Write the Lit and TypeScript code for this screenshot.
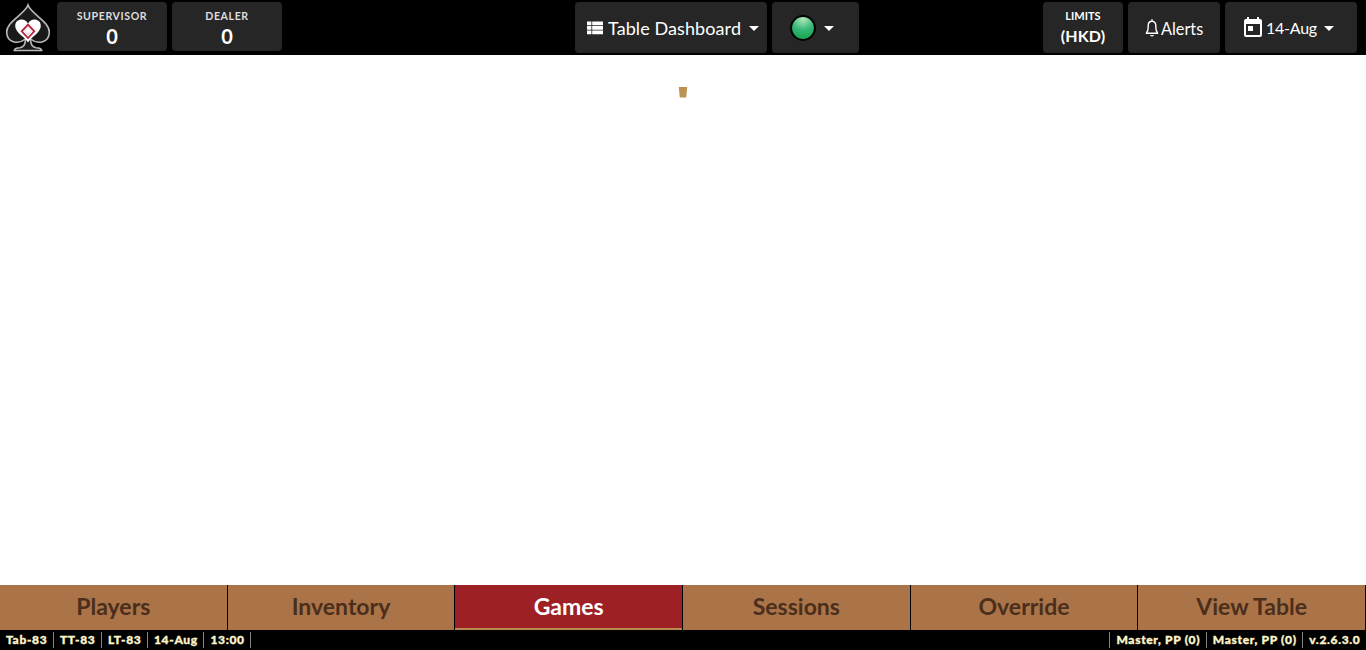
import { LitElement, html, css } from "lit";
import { customElement, state } from "lit/decorators.js";
import { classMap } from "lit/directives/class-map.js";

@customElement("app-root")
export class AppRoot extends LitElement {
  static styles = css`
    :host {
      display: flex;
      flex-direction: column;
      height: 100vh;
      background: #fff;
      font-family: Lato, sans-serif;
      color: #fff;
      overflow: hidden;
    }
    * { box-sizing: border-box; }
    header {
      flex: none;
      height: 55px;
      background: #000;
      display: grid;
      grid-template-columns: 575px 1fr auto;
      padding: 2px 9px 0 0;
    }
    .group { display: flex; gap: 5px; align-items: flex-start; }
    .logo { width: 52px; height: 51px; display: block; }
    .tile {
      height: 51px;
      background: #262626;
      border-radius: 4px;
      display: flex;
      align-items: center;
      font-size: 18px;
      line-height: 22px;
      white-space: nowrap;
    }
    .stat {
      flex-direction: column;
      width: 110px;
      height: 49px;
      padding-top: 8px;
    }
    .label {
      font-size: 10.6px;
      line-height: 12px;
      font-weight: 700;
      letter-spacing: 0.6px;
      color: #dedede;
    }
    .value { font-size: 20px; line-height: 24px; font-weight: 700; margin-top: 2px; }
    .dash { width: 192px; padding: 1px 0 0 12px; }
    .dash .text { margin-left: 5px; letter-spacing: 0.09px; }
    .status { width: 87px; padding: 1px 0 0 18px; }
    .limits { width: 80px; flex-direction: column; padding-top: 8px; }
    .limits .label { color: #fff; font-size: 11px; letter-spacing: 0; }
    .limits .value { font-size: 16px; line-height: 20px; margin-top: 4px; letter-spacing: 0.1px; }
    .alerts { width: 92px; padding: 1px 0 0 17px; font-size: 16.3px; }
    .alerts .text { margin-left: 2px; padding-top: 2px; }
    .date { width: 132px; padding: 1px 0 0 18px; font-size: 16px; letter-spacing: -0.25px; }
    .date .text { margin-left: 3px; }
    .caret {
      border: 5px solid transparent;
      border-top-color: #fff;
      border-bottom: 0;
      margin: 1px 0 0 8px;
    }
    .date .caret { margin-left: 7px; }
    svg { display: block; flex: none; }
    main { flex: 1; display: flex; justify-content: center; padding-top: 32px; }
    nav {
      flex: none;
      height: 45px;
      display: grid;
      grid-template-columns: repeat(6, 1fr);
    }
    .tab {
      border: 0;
      border-right: 1px solid #000;
      background: #aa7448;
      color: #4b2e1b;
      font: 700 23px/28px Lato, sans-serif;
      padding: 0 0 3px;
    }
    .tab.active {
      background: linear-gradient(#b98a4e, #b98a4e) bottom / 100% 2px no-repeat #9d2025;
      color: #fff;
    }
    footer {
      flex: none;
      height: 20px;
      background: #000;
      color: #fbf3cb;
      display: flex;
      justify-content: space-between;
      font-size: 12px;
      font-weight: 900;
      line-height: 16px;
      letter-spacing: 0.66px;
      -webkit-text-stroke: 0.35px #fbf3cb;
      padding-top: 2px;
    }
    .cells { display: flex; height: 16px; }
    .cell { padding: 0 5.6px 0 6px; border-right: 1px solid #858585; white-space: nowrap; }
    .right .cell { border-right: 0; border-left: 1px solid #858585; }
  `;

  @state() private active = "Games";

  private tabs = ["Players", "Inventory", "Games", "Sessions", "Override", "View Table"];

  private logo() {
    return html`<svg class="logo" viewBox="0 0 52 51">
      <path d="M28 3C31 12 49.300 19.500 49.300 30C49.300 40.500 38 43 30.500 37C30.500 42.500 32 45 36 45.700Q41.500 46 41.700 48.500H14.300Q14.500 46 20 45.700C24 45 25.500 42.500 25.500 37C18 43 6.700 40.500 6.700 30C6.700 19.500 25 12 28 3Z" fill="#1a1a1a" stroke="#b9b9b9" stroke-width="1.600"/>
      <path d="M28 40.500C25 35 15.200 30.500 15.200 24C15.200 16.500 25 15.500 28 21.500C31 15.500 40.800 16.500 40.800 24C40.800 30.500 31 35 28 40.500Z" fill="#fff"/>
      <path d="M28 22.600L34.300 29.300L28 36L21.700 29.300Z" fill="#fff" stroke="#b5243c" stroke-width="1.800"/>
      <path d="M28 25.400C29 27 31 28 31 29.900C31 31.500 29.500 31.800 28.500 30.900V32.700H27.500V30.900C26.500 31.800 25 31.500 25 29.900C25 28 27 27 28 25.400Z" fill="#fff" stroke="#c7a8ad" stroke-width=".4"/>
    </svg>`;
  }

  render() {
    return html`
      <header>
        <div class="group">
          ${this.logo()}
          <div class="tile stat"><span class="label">SUPERVISOR</span><span class="value">0</span></div>
          <div class="tile stat"><span class="label">DEALER</span><span class="value">0</span></div>
        </div>
        <div class="group">
          <div class="tile dash">
            <svg width="16" height="14" viewBox="0 0 16 14" fill="#fff">
              <path d="M0 .5h4.400v3.700H0zM5.200 .5H16v3.700H5.200zM0 5h4.400v3.700H0zM5.200 5H16v3.700H5.200zM0 9.500h4.400v3.700H0zM5.200 9.500H16v3.700H5.200z"/>
            </svg>
            <span class="text">Table Dashboard</span><span class="caret"></span>
          </div>
          <div class="tile status">
            <svg width="26" height="26" viewBox="0 0 26 26">
              <defs>
                <radialGradient id="lamp" cx="50%" cy="12%" r="85%">
                  <stop offset="0" stop-color="#b5e8ba"/>
                  <stop offset=".55" stop-color="#35b878"/>
                  <stop offset="1" stop-color="#16a34c"/>
                </radialGradient>
              </defs>
              <circle cx="13" cy="13" r="11.900" fill="url(#lamp)" stroke="#000" stroke-width="2"/>
            </svg>
            <span class="caret"></span>
          </div>
        </div>
        <div class="group">
          <div class="tile limits"><span class="label">LIMITS</span><span class="value">(HKD)</span></div>
          <div class="tile alerts">
            <svg width="14" height="20" viewBox="0 0 14 20">
              <path d="M1.300 15.300H12.700C11.300 13.800 10.800 12.500 10.800 9V7.500C10.800 5 9.300 3.300 7 3.300S3.200 5 3.200 7.500V9C3.200 12.500 2.700 13.800 1.300 15.300ZM7 3.300V1.300" fill="none" stroke="#fff" stroke-width="1.400" stroke-linejoin="round"/>
              <path d="M4.800 16.900H9.200Q8.800 18.500 7 18.500T4.800 16.900Z" fill="#ddd"/>
            </svg>
            <span class="text">Alerts</span>
          </div>
          <div class="tile date">
            <svg width="20" height="22" viewBox="0 0 20 22">
              <path d="M1 4Q1 2 3 2H4V0H6V2H14V0H16V2H17Q19 2 19 4V18Q19 20 17 20H3Q1 20 1 18ZM3 7V18H17V7Z" fill="#fff" fill-rule="evenodd"/>
              <path d="M5 9h5v5H5z" fill="#fff"/>
            </svg>
            <span class="text">14-Aug</span><span class="caret"></span>
          </div>
        </div>
      </header>
      <main>
        <svg width="10" height="11" viewBox="0 0 10 11"><path d="M.8 0H9.200L8.200 10.500H1.800Z" fill="#bd9151"/></svg>
      </main>
      <nav>
        ${this.tabs.map(
          (t) => html`<button class=${classMap({ tab: true, active: t === this.active })} @click=${() => (this.active = t)}>${t}</button>`
        )}
      </nav>
      <footer>
        <div class="cells">
          ${["Tab-83", "TT-83", "LT-83", "14-Aug", "13:00"].map((t) => html`<span class="cell">${t}</span>`)}
        </div>
        <div class="cells right">
          ${["Master, PP (0)", "Master, PP (0)", "v.2.6.3.0"].map((t) => html`<span class="cell">${t}</span>`)}
        </div>
      </footer>
    `;
  }
}
